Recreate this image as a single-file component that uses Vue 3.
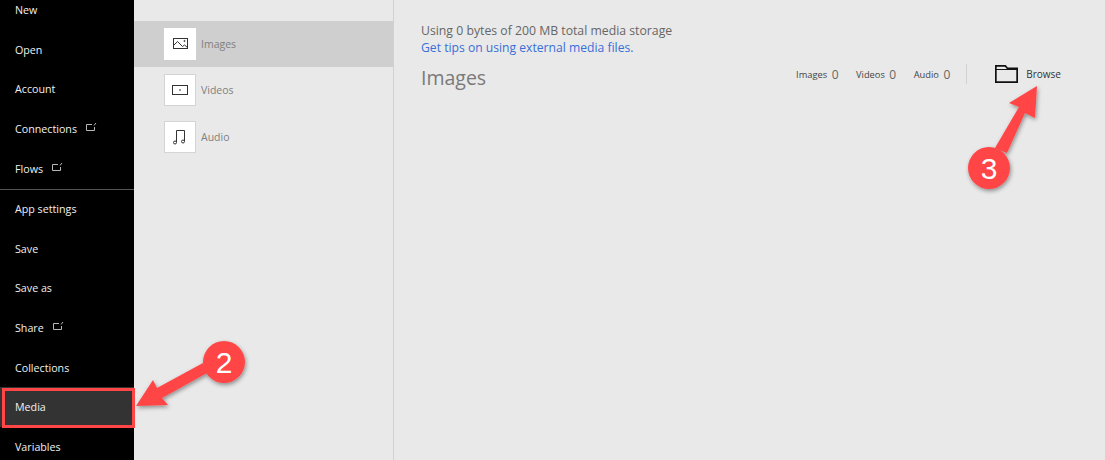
<script setup>
const navTop = [
  { label: 'New' },
  { label: 'Open' },
  { label: 'Account' },
  { label: 'Connections', ext: true },
  { label: 'Flows', ext: true },
]
const navBottom = [
  { label: 'App settings' },
  { label: 'Save' },
  { label: 'Save as' },
  { label: 'Share', ext: true },
  { label: 'Collections' },
  { label: 'Media', active: true },
  { label: 'Variables' },
]
const counts = [
  { label: 'Images', n: 0 },
  { label: 'Videos', n: 0 },
  { label: 'Audio', n: 0 },
]
</script>

<template>
  <div class="page">
    <nav class="nav">
      <div class="nav-list">
        <div v-for="i in navTop" :key="i.label" class="nav-item">
          <span>{{ i.label }}</span>
          <svg v-if="i.ext" class="ext" width="11" height="10" viewBox="0 0 11 10" fill="none" stroke="#b8b8b8" stroke-width="1">
            <path d="M6 2.500H.5v6h8V5" />
            <path d="M8 3.500 10 1" />
          </svg>
        </div>
        <div class="nav-divider"></div>
        <div v-for="i in navBottom" :key="i.label" class="nav-item" :class="{ active: i.active }">
          <span>{{ i.label }}</span>
          <svg v-if="i.ext" class="ext" width="11" height="10" viewBox="0 0 11 10" fill="none" stroke="#b8b8b8" stroke-width="1">
            <path d="M6 2.500H.5v6h8V5" />
            <path d="M8 3.500 10 1" />
          </svg>
        </div>
      </div>
    </nav>

    <aside class="types">
      <div class="type selected">
        <div class="type-icon">
          <svg width="15" height="12" viewBox="0 0 15 12" fill="none" stroke="#333" stroke-width="1">
            <rect x=".5" y=".5" width="14" height="10" />
            <path d="M.5 7.500 4.500 3.500l5 5 2-1.500 3 2.500" />
            <circle cx="11.500" cy="3" r=".6" />
          </svg>
        </div>
        <span>Images</span>
      </div>
      <div class="type">
        <div class="type-icon">
          <svg width="17" height="11" viewBox="0 0 17 11" fill="none" stroke="#333" stroke-width="1">
            <rect x=".5" y=".5" width="15" height="9" />
            <path d="M8 4v2" />
          </svg>
        </div>
        <span>Videos</span>
      </div>
      <div class="type">
        <div class="type-icon">
          <svg width="14" height="16" viewBox="0 0 14 16" fill="none" stroke="#333" stroke-width="1">
            <path d="M3.500 13V1.500h8V12" />
            <circle cx="2" cy="13.500" r="1.500" />
            <circle cx="10" cy="12.500" r="1.500" />
          </svg>
        </div>
        <span>Audio</span>
      </div>
    </aside>

    <main class="main">
      <p class="usage">Using 0 bytes of 200 MB total media storage</p>
      <a class="tips">Get tips on using external media files.</a>
      <div class="head">
        <h1>Images</h1>
        <div class="tools">
          <div class="counts">
            <div v-for="c in counts" :key="c.label" class="count">
              <span class="count-label">{{ c.label }}</span>
              <span class="count-n">{{ c.n }}</span>
            </div>
          </div>
          <div class="sep"></div>
          <div class="browse">
            <svg width="23" height="18" viewBox="0 0 23 18" fill="none" stroke="#111" stroke-width="1.700">
              <path d="M.85 17.150V.85h9.500l2 2.400h9.800v13.900z" />
              <path d="M.85 4.500h21.300" stroke-width="1" />
            </svg>
            <span>Browse</span>
          </div>
        </div>
      </div>
    </main>

    <div class="active-box"></div>

    <svg class="annot" width="1105" height="460" viewBox="0 0 1105 460">
      <defs>
        <filter id="sh" x="-20%" y="-20%" width="140%" height="140%">
          <feDropShadow dx="1" dy="2" stdDeviation="2" flood-color="#000" flood-opacity=".4" />
        </filter>
      </defs>
      <g filter="url(#sh)" fill="#ff4545">
        <path d="M136 406 153 380 157 388 203 363 207 373 162 398 168 405z" />
        <circle cx="224" cy="362" r="21" />
        <path d="M1037 86 1035 118 1025 113 1007 153 995 148 1019 107 1009 103z" />
        <circle cx="989" cy="168" r="21" />
      </g>
      <text x="224" y="373" class="num">2</text>
      <text x="989" y="179" class="num">3</text>
    </svg>
  </div>
</template>

<style>
html, body { margin: 0; background: #e9e9e9; }
</style>

<style scoped>
.page {
  position: relative;
  display: flex;
  width: 1105px;
  height: 460px;
  overflow: hidden;
  background: #e9e9e9;
  font-family: "Open Sans", "Noto Sans", sans-serif;
}
.nav {
  flex: 0 0 134px;
  background: #000;
  color: #f0f0f0;
  font-size: 10.700px;
}
.nav-list { margin-top: -9.600px; }
.nav-item {
  display: flex;
  align-items: center;
  gap: 9px;
  height: 39.600px;
  padding-left: 15px;
}
.nav-item.active { background: #333; }
.ext { margin-top: -3px; }
.nav-divider { height: 1px; margin-top: .6px; margin-bottom: -.6px; background: #555; }
.types {
  flex: 0 0 259px;
  padding-top: 21px;
  border-right: 1px solid #d2d2d2;
  box-sizing: content-box;
  color: #808080;
  font-size: 10.500px;
}
.type {
  display: flex;
  align-items: center;
  gap: 5px;
  height: 46.500px;
  padding-left: 30px;
}
.type.selected { height: 46px; background: #cfcfcf; }
.type-icon {
  display: flex;
  align-items: center;
  justify-content: center;
  box-sizing: border-box;
  width: 32px;
  height: 32px;
  background: #fff;
  border: 1px solid #d4d4d4;
}
.selected .type-icon { border-color: #fff; }
.main { flex: 1; padding: 22px 44px 0 27px; }
.usage { margin: 0; font-size: 12.250px; line-height: 17px; color: #666; }
.tips { display: block; font-size: 12.150px; line-height: 17px; color: #3a6fd8; }
.head { display: flex; align-items: flex-start; justify-content: space-between; margin-top: 7px; }
h1 { margin: 0; font-size: 19.500px; font-weight: 400; line-height: 30px; color: #7a7a7a; }
.tools { display: flex; align-items: center; height: 20px; margin-top: 1px; }
.counts { display: flex; gap: 17.500px; }
.count { display: flex; align-items: center; gap: 4.500px; color: #444; }
.count-label { font-size: 9.300px; }
.count-n { font-size: 12px; color: #666; }
.sep { width: 1px; height: 20px; margin: 0 28px 0 16px; background: #d2d2d2; }
.browse { display: flex; align-items: center; gap: 8px; font-size: 10px; color: #333; }
.active-box {
  position: absolute;
  left: 2px;
  top: 388px;
  box-sizing: border-box;
  width: 133px;
  height: 40px;
  border: 3px solid #ff4545;
}
.annot { position: absolute; left: 0; top: 0; }
.num {
  font-family: "Liberation Sans", sans-serif;
  font-size: 30px;
  fill: #fff;
  text-anchor: middle;
}
</style>
